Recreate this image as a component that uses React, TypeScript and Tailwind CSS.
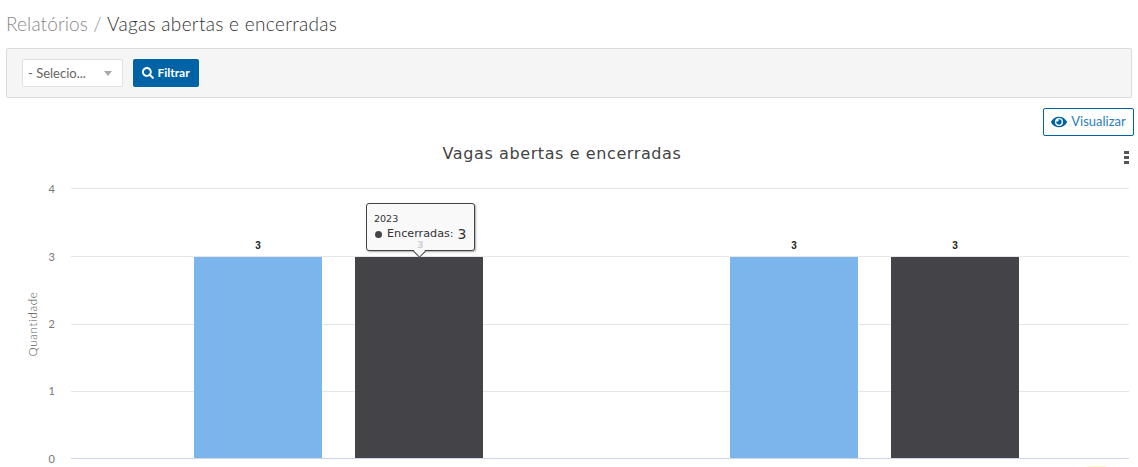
import { FaEye, FaSearch } from 'react-icons/fa';

const gridY = [188, 256, 324, 391];
const ticks = [
  { label: '4', y: 193 },
  { label: '3', y: 261 },
  { label: '2', y: 328 },
  { label: '1', y: 395 },
  { label: '0', y: 463 },
];
const bars = [
  { x: 194, fill: '#7cb5ec' },
  { x: 355, fill: '#434348' },
  { x: 730, fill: '#7cb5ec' },
  { x: 891, fill: '#434348' },
];

function Chart() {
  return (
    <svg width="1138" height="331" viewBox="0 136 1138 331" className="block">
      <text x="562" y="159" textAnchor="middle" fontSize="16" letterSpacing="0.6" fill="#444" fontFamily="'DejaVu Sans', sans-serif">
        Vagas abertas e encerradas
      </text>
      <rect x="1124" y="151" width="5" height="3" fill="#555" />
      <rect x="1124" y="156" width="5" height="3" fill="#555" />
      <rect x="1124" y="161" width="5" height="3" fill="#555" />
      {gridY.map((y) => (
        <line key={y} x1="71" x2="1129" y1={y + 0.5} y2={y + 0.5} stroke="#e6e6e6" />
      ))}
      <line x1="71" x2="1129" y1="458.5" y2="458.5" stroke="#ccd6eb" />
      {ticks.map((t) => (
        <text key={t.label} x="55" y={t.y} textAnchor="end" fontSize="11" fill="#777" fontFamily="Lato, sans-serif">
          {t.label}
        </text>
      ))}
      <text transform="translate(37 324) rotate(-90)" textAnchor="middle" fontSize="11.5" letterSpacing="0.7" fontWeight="300" fill="#555" fontFamily="Lato, sans-serif">
        Quantidade
      </text>
      {bars.map((b) => (
        <g key={b.x}>
          <rect x={b.x} y="257" width="128" height="201" fill={b.fill} />
          <text x={b.x + 64} y="249" textAnchor="middle" fontSize="10" fontWeight="700" fill="#222" fontFamily="'Liberation Sans', sans-serif">
            3
          </text>
        </g>
      ))}
    </svg>
  );
}

function ChartTooltip() {
  return (
    <div className="absolute left-[366px] top-[203px] w-[109px] h-[48px] rounded-[3px] border border-[#434348] bg-[#f9f9f9] shadow-[1px_1px_2px_rgba(0,0,0,0.35)] font-['DejaVu_Sans',sans-serif] text-[#333]">
      <div className="pl-[7px] pt-[9px] text-[9.5px] leading-[12px]">2023</div>
      <div className="flex items-center pl-[8px] pt-[1px] text-[11.2px] leading-[16px] whitespace-nowrap">
        <span className="w-[7px] h-[7px] rounded-full bg-[#434348] mr-[5px]" />
        Encerradas:<span className="ml-[4px] text-[14px]">3</span>
      </div>
      <div className="absolute left-[48px] bottom-[-6px] w-[9px] h-[9px] rotate-45 bg-[#f9f9f9] border-r border-b border-[#434348]" />
      <div className="absolute left-0 right-0 top-[36px] text-center text-[9px] leading-[10px] font-bold text-[#d0d0d0]">3</div>
    </div>
  );
}

export default function App() {
  return (
    <div className="relative w-[1138px] h-[467px] overflow-hidden bg-white font-['Lato',sans-serif]">
      <h1 className="pl-[6px] pt-[12px] h-[48px] text-[19px] tracking-[0.12px] font-light leading-[24px] text-[#333]">
        <span className="text-[#888]">Relatórios / </span>
        <span className="tracking-[0.32px]">Vagas abertas e encerradas</span>
      </h1>
      <div className="mx-[6px] h-[50px] flex items-center gap-[10px] px-[15px] rounded-[2px] border border-[#dcdcdc] bg-[#f5f5f5]">
        <div className="w-[101px] h-[28px] flex items-center justify-between pl-[5px] pr-[10px] rounded-[2px] border border-[#e0e0e0] bg-white text-[13px] text-[#666]">
          <span className="pt-[1px]">- Selecio...</span>
          <span className="w-0 h-0 border-x-[4px] border-x-transparent border-t-[5px] border-t-[#aaa]" />
        </div>
        <button className="w-[66px] h-[28px] flex items-center justify-center gap-[3px] rounded-[2px] bg-[#0063a6] text-white text-[12px] font-bold">
          <FaSearch size={12} />
          Filtrar
        </button>
      </div>
      <div className="flex justify-end pr-[4px] pt-[10px]">
        <button className="w-[91px] h-[28px] flex items-center justify-center gap-[4px] rounded-[2px] border border-[#0063a6] bg-white text-[#2c7fb8] text-[13px]">
          <FaEye size={16} className="text-[#0063a6]" />
          Visualizar
        </button>
      </div>
      <Chart />
      <ChartTooltip />
      <div className="absolute left-[1087px] top-[466px] w-[20px] h-[4px] rounded-full bg-[#fdf3c4]" />
    </div>
  );
}
